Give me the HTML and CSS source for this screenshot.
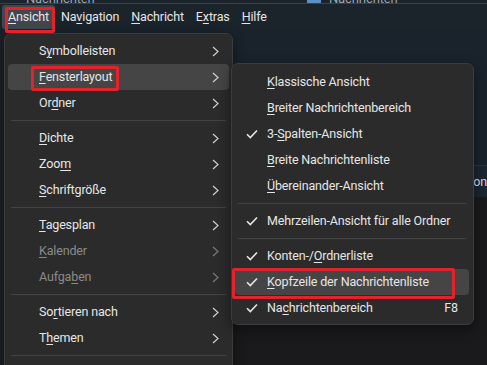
FILE: index.html
```html
<!DOCTYPE html>
<html lang="de">
<head>
<meta charset="UTF-8">
<meta name="viewport" content="width=device-width, initial-scale=1.0">
<title>Ansicht · Fensterlayout</title>
<link rel="stylesheet" href="styles.css">
</head>
<body>

<div class="titlebar">
  <span class="tab t1">Nachrichten</span>
  <span class="tab t2"><i class="tab-ico"></i>Nachrichten</span>
</div>

<nav class="menubar">
  <span class="mb-item open"><u>A</u>nsicht</span>
  <span class="mb-item">Na<u>v</u>igation</span>
  <span class="mb-item"><u>N</u>achricht</span>
  <span class="mb-item">E<u>x</u>tras</span>
  <span class="mb-item"><u>H</u>ilfe</span>
</nav>

<div class="app">
  <div class="folders"></div>
  <div class="main">
    <div class="header-pane"></div>
    <div class="list-head"><span>Von</span></div>
    <div class="list"></div>
  </div>
</div>

<!-- Menü Ansicht -->
<div class="menu main-menu">
  <div class="mi"><span class="lbl">S<u>y</u>mbolleisten</span><svg class="arr" viewBox="0 0 7 11"><polyline points="1,1 6,5.5 1,10"/></svg></div>
  <div class="mi hover"><span class="lbl"><u>F</u>ensterlayout</span><svg class="arr" viewBox="0 0 7 11"><polyline points="1,1 6,5.5 1,10"/></svg></div>
  <div class="mi"><span class="lbl">Or<u>d</u>ner</span><svg class="arr" viewBox="0 0 7 11"><polyline points="1,1 6,5.5 1,10"/></svg></div>
  <div class="sep"></div>
  <div class="mi"><span class="lbl"><u>D</u>ichte</span><svg class="arr" viewBox="0 0 7 11"><polyline points="1,1 6,5.5 1,10"/></svg></div>
  <div class="mi"><span class="lbl">Zoo<u>m</u></span><svg class="arr" viewBox="0 0 7 11"><polyline points="1,1 6,5.5 1,10"/></svg></div>
  <div class="mi"><span class="lbl"><u>S</u>chriftgröße</span><svg class="arr" viewBox="0 0 7 11"><polyline points="1,1 6,5.5 1,10"/></svg></div>
  <div class="sep"></div>
  <div class="mi"><span class="lbl"><u>T</u>agesplan</span><svg class="arr" viewBox="0 0 7 11"><polyline points="1,1 6,5.5 1,10"/></svg></div>
  <div class="mi off"><span class="lbl"><u>K</u>alender</span><svg class="arr" viewBox="0 0 7 11"><polyline points="1,1 6,5.5 1,10"/></svg></div>
  <div class="mi off"><span class="lbl">Aufga<u>b</u>en</span><svg class="arr" viewBox="0 0 7 11"><polyline points="1,1 6,5.5 1,10"/></svg></div>
  <div class="sep"></div>
  <div class="mi"><span class="lbl">So<u>r</u>tieren nach</span><svg class="arr" viewBox="0 0 7 11"><polyline points="1,1 6,5.5 1,10"/></svg></div>
  <div class="mi"><span class="lbl">T<u>h</u>emen</span><svg class="arr" viewBox="0 0 7 11"><polyline points="1,1 6,5.5 1,10"/></svg></div>
  <div class="sep"></div>
</div>

<!-- Untermenü Fensterlayout -->
<div class="menu sub-menu">
  <div class="mi"><span class="chk"></span><span class="lbl"><u>K</u>lassische Ansicht</span></div>
  <div class="mi"><span class="chk"></span><span class="lbl"><u>B</u>reiter Nachrichtenbereich</span></div>
  <div class="mi"><span class="chk"><svg viewBox="0 0 12 10"><polyline points="1,5.2 4.3,8.5 11,1.5"/></svg></span><span class="lbl">3-<u>S</u>palten-Ansicht</span></div>
  <div class="mi"><span class="chk"></span><span class="lbl"><u>B</u>reite Nachrichtenliste</span></div>
  <div class="mi"><span class="chk"></span><span class="lbl"><u>Ü</u>bereinander-Ansicht</span></div>
  <div class="sep"></div>
  <div class="mi"><span class="chk"><svg viewBox="0 0 12 10"><polyline points="1,5.2 4.3,8.5 11,1.5"/></svg></span><span class="lbl">Mehrzeilen-Ansicht für alle Ordner</span></div>
  <div class="sep"></div>
  <div class="mi"><span class="chk"><svg viewBox="0 0 12 10"><polyline points="1,5.2 4.3,8.5 11,1.5"/></svg></span><span class="lbl">Konten-/<u>O</u>rdnerliste</span></div>
  <div class="mi hover"><span class="chk"><svg viewBox="0 0 12 10"><polyline points="1,5.2 4.3,8.5 11,1.5"/></svg></span><span class="lbl"><u>K</u>opfzeile der Nachrichtenliste</span></div>
  <div class="mi"><span class="chk"><svg viewBox="0 0 12 10"><polyline points="1,5.2 4.3,8.5 11,1.5"/></svg></span><span class="lbl">Na<u>c</u>hrichtenbereich</span><span class="key">F8</span></div>
</div>

<!-- Markierungen -->
<div class="mark mark-ansicht"></div>
<div class="mark mark-layout"></div>
<div class="mark mark-kopf"></div>

</body>
</html>
```

FILE: styles.css
```css
:root {
  --bar: #1b232b;
  --menu: #2b2b2b;
  --hover: #454545;
  --line: #434343;
  --text: #e6e6e6;
  --muted: #8a8a8a;
  --red: #e3232b;
}
body{margin:0;width:487px;height:365px;overflow:hidden;background:var(--bar);color:var(--text);font:12.5px/18px Roboto,"Noto Sans",sans-serif;letter-spacing:-.15px;position:relative;}
u{text-decoration-thickness:1px;text-underline-offset:2px;}

/* Titelleiste (nur unterer Rand sichtbar) */
.titlebar{height:3px;overflow:hidden;border-bottom:1px solid #38424d;position:relative;}
.tab{position:absolute;top:-10px;font-size:13px;color:#9aa6b3;}
.t1{left:26px;}
.t2{left:307px;display:flex;gap:8px;}
.tab-ico{display:inline-block;width:14px;height:14px;background:#5c8fc4;margin-top:1px;}

.menubar{display:flex;align-items:center;height:26px;padding:0 2px;}
.mb-item{padding:3px 6px;border-radius:3px;}
.mb-item.open{background:#41474f;}

/* Hintergrund der Anwendung */
.app{display:flex;height:335px;}
.folders{width:40px;background:#1d2026;}
.main{flex:1;display:flex;flex-direction:column;}
.header-pane{height:135px;background:#1a232c;border-bottom:1px solid #2c3640;}
.list-head{height:31px;background:#1c2631;padding-left:245px;display:flex;align-items:center;border-left:1px solid #3a4550;margin-left:193px;}
.list-head span{color:#d6dde6;}
.list{flex:1;background:#1a1a1c;}

/* Menüs */
.menu{position:absolute;background:var(--menu);border:1px solid #3c3c3c;border-radius:7px;box-shadow:0 4px 14px rgba(0,0,0,.45);}
.main-menu{left:4px;top:33px;width:229px;height:340px;padding:4px 3px 0;box-sizing:border-box;}
.sub-menu{left:231px;top:63px;width:243px;height:262px;padding:5px 4px 3px 3px;box-sizing:border-box;}
.mi{display:flex;align-items:center;height:26px;border-radius:4px;}
.main-menu .mi{padding:0 10px 0 31px;}
.sub-menu .mi{padding:0 11px 0 11px;}
.mi.hover{background:var(--hover);}
.mi.off{color:var(--muted);}
.lbl{flex:1;white-space:nowrap;}
.arr{width:7px;height:11px;fill:none;stroke:#d0d0d0;stroke-width:1.2;}
.mi.off .arr{stroke:#7a7a7a;}
.chk{width:21px;height:10px;flex:none;}
.chk svg{width:12px;height:10px;fill:none;stroke:var(--text);stroke-width:1.6;display:block;}
.key{margin-left:10px;}
.sep{height:9px;margin:0 3px;position:relative;}
.sep::after{content:"";position:absolute;left:0;right:0;top:4px;border-top:1px solid var(--line);}

/* rote Markierungen */
.mark{position:absolute;border:3px solid var(--red);border-radius:2px;box-sizing:border-box;}
.mark-ansicht{left:5px;top:7px;width:50px;height:26px;}
.mark-layout{left:31px;top:66px;width:88px;height:25px;}
.mark-kopf{left:232px;top:268px;width:223px;height:31px;}
```
